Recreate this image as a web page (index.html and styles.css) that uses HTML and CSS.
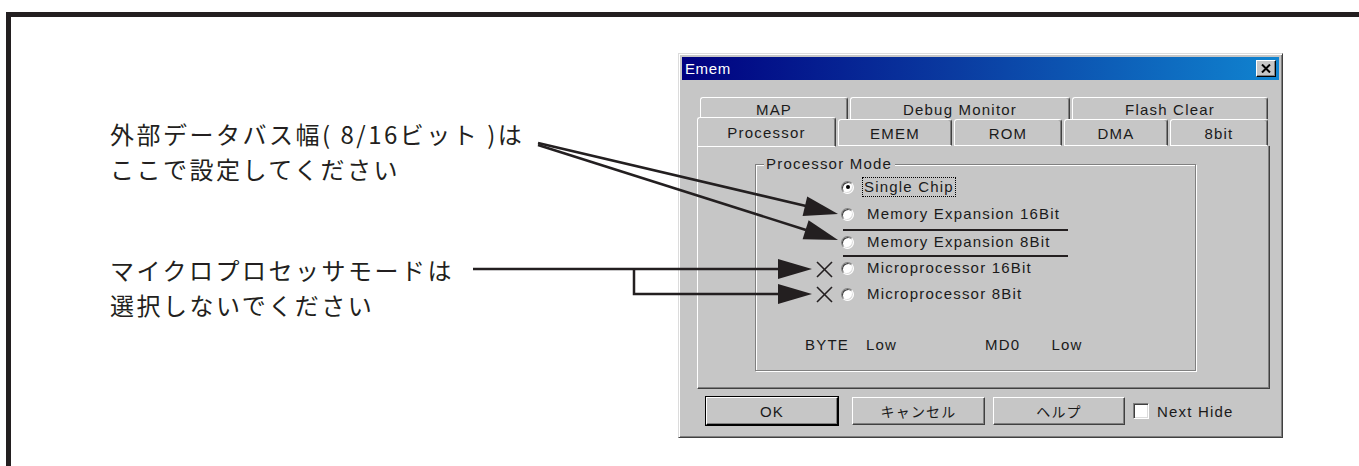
FILE: index.html
```html
<!DOCTYPE html>
<html lang="ja">
<head>
<meta charset="utf-8">
<title>Emem</title>
<link rel="stylesheet" href="styles.css">
</head>
<body>
<div class="frame">
  <div class="notes">
    <p class="note note-bus">外部データバス幅( 8/16ビット )は<br>ここで設定してください</p>
    <p class="note note-cpu">マイクロプロセッサモードは<br>選択しないでください</p>
  </div>
  <div class="dialog">
    <div class="titlebar">
      <span class="title">Emem</span>
      <span class="close"><svg width="10" height="9" viewBox="0 0 10 9"><path d="M1 0.5 L9 8.5 M9 0.5 L1 8.5" stroke="#000" stroke-width="2" fill="none"/></svg></span>
    </div>
    <div class="tabs">
      <div class="tabrow back">
        <div class="tab w-map">MAP</div>
        <div class="tab w-debug">Debug Monitor</div>
        <div class="tab w-flash">Flash Clear</div>
      </div>
      <div class="tabrow front">
        <div class="tab w-proc selected">Processor</div>
        <div class="tab w-emem">EMEM</div>
        <div class="tab w-rom">ROM</div>
        <div class="tab w-dma">DMA</div>
        <div class="tab w-8bit">8bit</div>
      </div>
      <div class="panel">
        <div class="group">
          <span class="legend">Processor Mode</span>
          <div class="radios">
            <div class="radio r1"><span class="dot checked"></span><span class="label focus">Single Chip</span></div>
            <div class="radio r2"><span class="dot"></span><span class="label">Memory Expansion 16Bit</span></div>
            <div class="radio r3"><span class="dot"></span><span class="label">Memory Expansion 8Bit</span></div>
            <div class="radio r4"><span class="dot"></span><span class="label">Microprocessor 16Bit</span></div>
            <div class="radio r5"><span class="dot"></span><span class="label">Microprocessor 8Bit</span></div>
          </div>
          <div class="pins">
            <span class="pin-byte">BYTE</span><span class="pin-low1">Low</span><span class="pin-md0">MD0</span><span class="pin-low2">Low</span>
          </div>
        </div>
      </div>
    </div>
    <div class="buttons">
      <div class="btn default">OK</div>
      <div class="btn btn-cancel">キャンセル</div>
      <div class="btn btn-help">ヘルプ</div>
      <div class="check"><span class="box"></span><span>Next Hide</span></div>
    </div>
  </div>
  <svg class="arrows" width="1359" height="466" viewBox="0 0 1359 466">
    <g stroke="#231f20" stroke-width="2.5" fill="none">
      <line x1="538" y1="143" x2="806" y2="206"/>
      <line x1="538" y1="145" x2="806" y2="230"/>
      <line x1="473" y1="269" x2="782" y2="269"/>
      <polyline points="634,269 634,294 782,294"/>
    </g>
    <g fill="#231f20">
      <polygon points="838,214 802.6,215.9 807.2,196.5"/>
      <polygon points="838,240 802.6,239.3 808.6,220.3"/>
      <polygon points="812,269 778,259 778,279"/>
      <polygon points="812,294 778,284 778,304"/>
    </g>
    <g stroke="#231f20" stroke-width="2.2">
      <line x1="843" y1="230" x2="1068" y2="230"/>
      <line x1="843" y1="256" x2="1068" y2="256"/>
    </g>
    <g stroke="#231f20" stroke-width="1.6">
      <line x1="817" y1="262" x2="832" y2="277"/>
      <line x1="832" y1="262" x2="817" y2="277"/>
      <line x1="817" y1="287" x2="832" y2="302"/>
      <line x1="832" y1="287" x2="817" y2="302"/>
    </g>
  </svg>
</div>
</body>
</html>
```

FILE: styles.css
```css
html, body {
  margin: 0;
  padding: 0;
  background: #ffffff;
  overflow: hidden;
}

body {
  width: 1359px;
  height: 466px;
}

.frame {
  position: relative;
  margin: 12px 0 0 6px;
  width: 1348px;
  height: 449px;
  border-top: 5px solid #231f20;
  border-left: 5px solid #231f20;
  display: flex;
  align-items: flex-start;
}

.notes {
  width: 667px;
  flex: none;
  box-sizing: border-box;
  padding-left: 99px;
  padding-top: 99px;
}

.note {
  margin: 0;
  font-family: "Noto Sans CJK JP", "Noto Sans", sans-serif;
  font-size: 24px;
  letter-spacing: 2.5px;
  line-height: 35px;
  color: #231f20;
  white-space: nowrap;
}

.note-cpu {
  margin-top: 66px;
}

/* ---------- dialog ---------- */
.dialog {
  flex: none;
  width: 605px;
  height: 385px;
  margin-top: 36px;
  box-sizing: border-box;
  background: #c6c6c6;
  border: 1px solid;
  border-color: #dcdcdc #404040 #404040 #dcdcdc;
  box-shadow: inset 1px 1px #ffffff, inset -1px -1px #808080;
  padding: 3px;
  display: flex;
  flex-direction: column;
  font-family: "Liberation Sans", "Noto Sans CJK JP", sans-serif;
  font-size: 15px;
  letter-spacing: 1.2px;
  color: #1a1a1a;
}

.titlebar {
  height: 23px;
  flex: none;
  display: flex;
  align-items: center;
  justify-content: space-between;
  background: linear-gradient(90deg, #000080 0%, #0a3aa0 45%, #1084d0 100%);
  color: #ffffff;
  padding: 0 3px 0 3px;
}

.title {
  font-size: 15px;
  letter-spacing: 0.6px;
}

.close {
  width: 20px;
  height: 17px;
  box-sizing: border-box;
  background: #c6c6c6;
  border: 1px solid;
  border-color: #ffffff #000000 #000000 #ffffff;
  box-shadow: inset -1px -1px #808080;
  display: flex;
  align-items: center;
  justify-content: center;
}

.close svg {
  display: block;
}

/* ---------- tabs ---------- */
.tabs {
  margin: 17px 9px 0 15px;
  display: flex;
  flex-direction: column;
}

.tabrow {
  display: flex;
  gap: 2px;
}

.tabrow.back {
  padding-left: 3px;
  height: 22px;
}

.tabrow.front {
  height: 27px;
  position: relative;
  z-index: 1;
}

.tab {
  box-sizing: border-box;
  height: 100%;
  background: #c6c6c6;
  border-top: 1px solid #ffffff;
  border-left: 1px solid #ffffff;
  border-right: 1px solid #404040;
  box-shadow: inset -1px 0 #808080;
  border-radius: 3px 3px 0 0;
  display: flex;
  align-items: center;
  justify-content: center;
  padding-top: 1px;
}

.tabrow.front .tab {
  border-bottom: 1px solid #ffffff;
}

.tab.selected {
  height: 30px;
  margin-top: -2px;
  border-bottom: none;
  padding-top: 0;
}

.w-map { width: 148px; }
.w-debug { width: 220px; }
.w-flash { width: 196px; }
.w-proc { width: 139px; }
.w-emem { width: 114px; }
.w-rom { width: 108px; }
.w-dma { width: 104px; }
.w-8bit { width: 98px; }

.panel {
  height: 243px;
  box-sizing: border-box;
  border: 1px solid;
  border-color: #ffffff #404040 #404040 #ffffff;
  border-top: none;
  box-shadow: inset -1px -1px #808080;
  padding: 18px 73px 0 57px;
}

/* ---------- group box ---------- */
.group {
  position: relative;
  height: 207px;
  box-sizing: border-box;
  border: 1px solid #808080;
  box-shadow: 1px 1px #ffffff, inset 1px 1px #ffffff;
  padding: 10px 0 0 0;
}

.legend {
  position: absolute;
  left: 8px;
  top: -10px;
  padding: 0 3px 0 2px;
  background: #c6c6c6;
  line-height: 18px;
}

.radios {
  display: flex;
  flex-direction: column;
  padding-left: 85px;
}

.radio {
  display: flex;
  align-items: center;
  height: 26px;
}

.radio.r1 { height: 24px; }
.radio.r2 { height: 30px; }

.dot {
  width: 13px;
  height: 13px;
  box-sizing: border-box;
  border-radius: 50%;
  background: #ffffff;
  border: 1px solid;
  border-color: #808080 #ffffff #ffffff #808080;
  box-shadow: inset 1px 1px #404040, inset -1px -1px #dcdcdc;
  position: relative;
  flex: none;
}

.dot.checked::after {
  content: "";
  position: absolute;
  left: 3.5px;
  top: 3.5px;
  width: 4px;
  height: 4px;
  border-radius: 50%;
  background: #000;
}

.label {
  margin-left: 11px;
  line-height: 18px;
  padding: 0 1px;
  border: 1px solid transparent;
}

.label.focus {
  margin-left: 8px;
  border: 1px dotted #000;
}

.pins {
  display: flex;
  margin-top: 29px;
  padding-left: 49px;
}

.pin-low1 { margin-left: 17px; }
.pin-md0 { margin-left: 88px; }
.pin-low2 { margin-left: 31px; }

/* ---------- buttons ---------- */
.buttons {
  display: flex;
  align-items: center;
  margin: 8px 0 0 24px;
  height: 28px;
}

.btn {
  box-sizing: border-box;
  height: 28px;
  width: 133px;
  background: #c6c6c6;
  border: 1px solid;
  border-color: #ffffff #404040 #404040 #ffffff;
  box-shadow: inset -1px -1px #808080;
  display: flex;
  align-items: center;
  justify-content: center;
}

.btn.default {
  width: 132px;
  outline: 1px solid #000;
  outline-offset: 0;
  border-color: #ffffff #000000 #000000 #ffffff;
  box-shadow: inset -1px -1px #808080, 1px 1px #000;
}

.btn-cancel {
  margin-left: 14px;
  font-family: "Noto Sans CJK JP", sans-serif;
  font-size: 14px;
}

.btn-help {
  margin-left: 8px;
  width: 132px;
  font-family: "Noto Sans CJK JP", sans-serif;
  font-size: 14px;
}

.check {
  display: flex;
  align-items: center;
  margin-left: 8px;
}

.box {
  width: 16px;
  height: 16px;
  box-sizing: border-box;
  background: #ffffff;
  border: 1px solid;
  border-color: #808080 #ffffff #ffffff #808080;
  box-shadow: inset 1px 1px #404040, inset -1px -1px #dcdcdc;
  margin-right: 8px;
}

/* ---------- annotation overlay ---------- */
.arrows {
  position: absolute;
  left: -11px;
  top: -17px;
  pointer-events: none;
}
```
